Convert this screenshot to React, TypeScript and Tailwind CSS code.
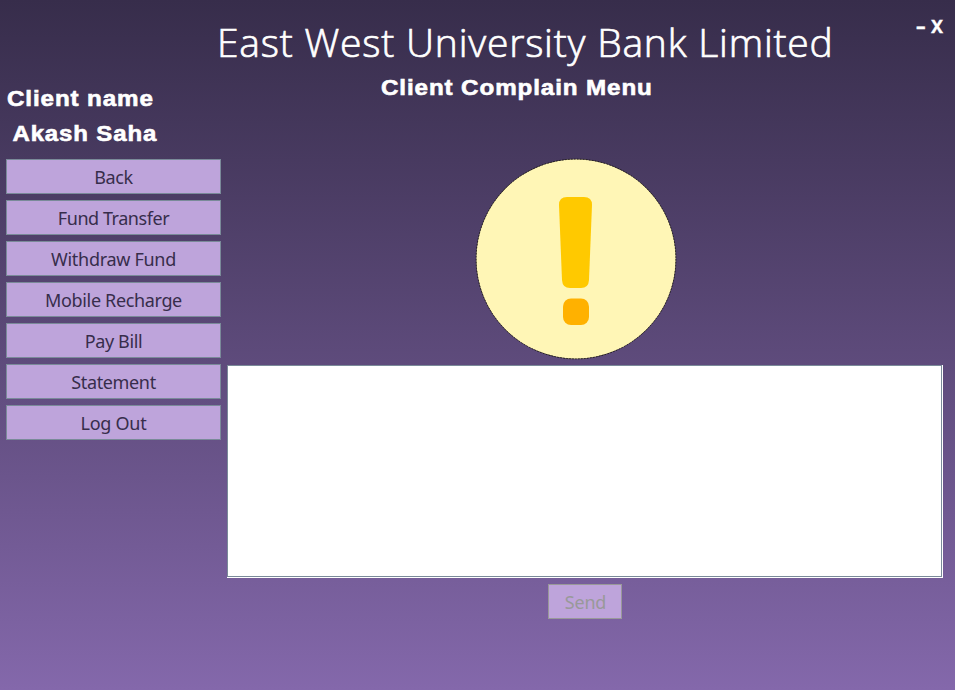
const MENU = [
  { label: 'Back', tracking: 'tracking-[-0.35px]' },
  { label: 'Fund Transfer', tracking: 'tracking-[-0.45px]' },
  { label: 'Withdraw Fund', tracking: 'tracking-[-0.3px]' },
  { label: 'Mobile Recharge', tracking: 'tracking-[-0.35px]' },
  { label: 'Pay Bill', tracking: 'tracking-[-0.35px]' },
  { label: 'Statement', tracking: 'tracking-[-0.35px]' },
  { label: 'Log Out', tracking: 'tracking-[-0.25px]' },
];

function WarningIcon() {
  return (
    <svg width="202" height="202" viewBox="0 0 202 202" className="block">
      <circle cx="101" cy="101" r="99.900" fill="#141010" />
      <circle cx="101" cy="101" r="99.700" fill="#fff6b6" />
      <circle cx="101" cy="101" r="99.900" fill="none" stroke="#141010" strokeWidth="0.8" strokeDasharray="1.5 1.5" />
      <path
        d="M92 39H109Q117 39 117 47L114 122Q113.500 130 106 130H95Q87.500 130 87 122L84 47Q84 39 92 39Z"
        fill="#ffc900"
      />
      <rect x="88" y="140.500" width="26" height="26.500" rx="8" fill="#ffb100" />
    </svg>
  );
}

export default function App() {
  return (
    <div className="flex h-[690px] w-[955px] flex-col overflow-hidden bg-linear-to-b from-[#372d4b] to-[#8468ab] font-['Noto_Sans','Open_Sans',sans-serif]">
      <header className="flex h-[66px] shrink-0 items-start text-white">
        <h1 className="ml-[217px] w-[690px] pt-[14px] font-['Open_Sans','Noto_Sans',sans-serif] text-[39px] leading-[56px] font-light tracking-[0.79px] whitespace-nowrap [-webkit-text-stroke:0.7px_white]">
          East West University Bank Limited
        </h1>
        <div className="flex gap-[5px] pt-[12px] pl-[9px] text-[18px] leading-[28px] font-bold [-webkit-text-stroke:0.3px_white]">
          <button className="w-[10px] origin-left scale-x-150 text-left text-[20px]">-</button>
          <button>X</button>
        </div>
      </header>
      <div className="flex pl-[6px]">
        <aside className="flex w-[215px] shrink-0 flex-col">
          <div className="h-[93px] pt-[15px] pl-px font-['Liberation_Sans',Arial,sans-serif] text-[22px] leading-[35px] font-bold tracking-[0.8px] whitespace-nowrap text-white [-webkit-text-stroke:0.6px_white]">
            <div className="origin-left scale-x-[1.1]">Client name</div>
            <div className="origin-left scale-x-[1.09] pl-[5px]">Akash Saha</div>
          </div>
          <nav className="flex flex-col gap-[6px]">
            {MENU.map((item) => (
              <button
                key={item.label}
                className={`h-[35px] border border-[#7a8a99] bg-[#bea4db] pt-[2px] text-[18px] leading-[31px] text-[#372d4b] ${item.tracking}`}
              >
                {item.label}
              </button>
            ))}
          </nav>
        </aside>
        <main className="ml-[6px] flex w-[716px] flex-col">
          <div className="h-[92px] pt-[4px] pl-[154px]">
            <h2 className="origin-left scale-x-[1.1] font-['Liberation_Sans',Arial,sans-serif] text-[22px] leading-[35px] font-bold tracking-[0.8px] whitespace-nowrap text-white [-webkit-text-stroke:0.6px_white]">
              Client Complain Menu
            </h2>
          </div>
          <div className="h-[207px] pl-[248px]">
            <WarningIcon />
          </div>
          <div className="h-[213px] border-r border-b border-white">
            <textarea className="block h-[212px] w-[715px] resize-none border border-[#7a8a99] bg-white outline-none" />
          </div>
          <button
            disabled
            className="mt-[6px] ml-[321px] h-[35px] w-[74px] border border-[#999999] bg-[#bea4db] pt-[2px] pl-px text-[18px] leading-[31px] tracking-[-0.2px] text-[#999999]"
          >
            Send
          </button>
        </main>
      </div>
    </div>
  );
}
